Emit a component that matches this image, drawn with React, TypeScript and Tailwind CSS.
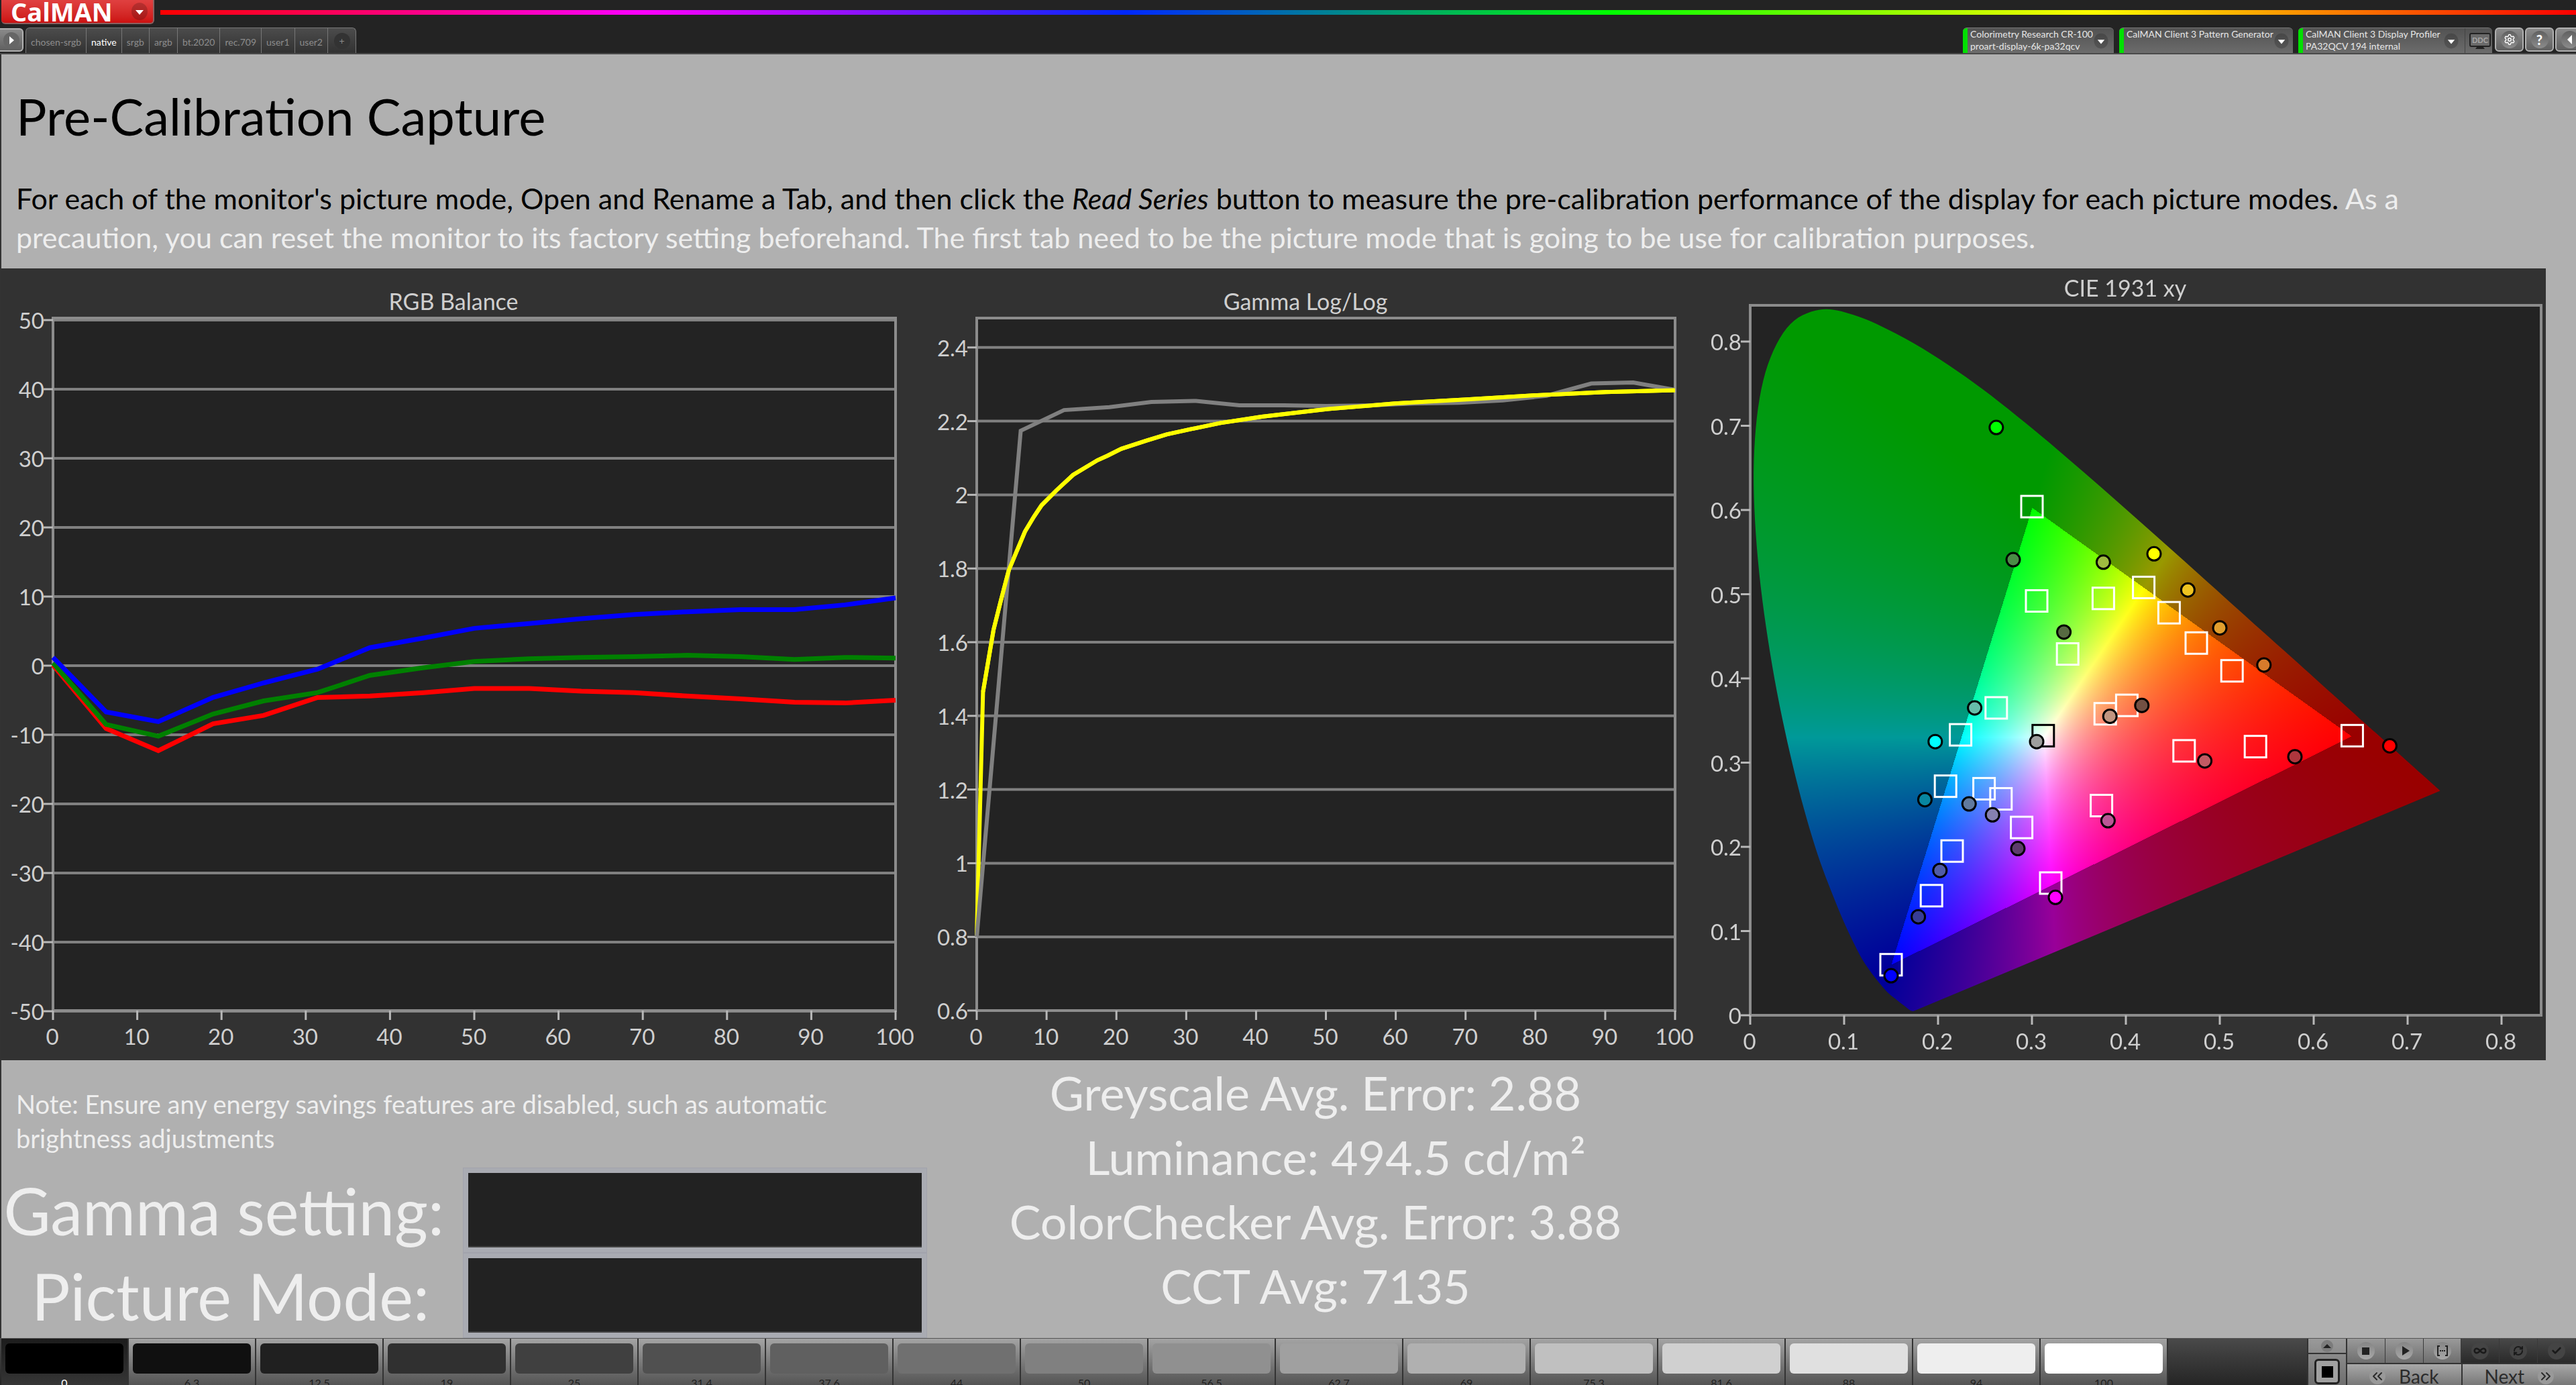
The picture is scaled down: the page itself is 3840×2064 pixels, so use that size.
import { useLayoutEffect, useRef } from "react";
import type { ReactNode } from "react";
import { Check, ChevronsLeft, ChevronsRight, Infinity as Loop, RefreshCw, Settings } from "lucide-react";

type Point = [number, number];

const tabs = ["chosen-srgb", "native", "srgb", "argb", "bt.2020", "rec.709", "user1", "user2"];

const levels = [0, 6.3, 12.5, 19, 25, 31.4, 37.6, 44, 50, 56.5, 62.7, 69, 75.3, 81.6, 88, 94, 100];

const swatches = [
  "bg-[#000000]",
  "bg-[#101010]",
  "bg-[#202020]",
  "bg-[#303030]",
  "bg-[#404040]",
  "bg-[#505050]",
  "bg-[#606060]",
  "bg-[#707070]",
  "bg-[#808080]",
  "bg-[#909090]",
  "bg-[#a0a0a0]",
  "bg-[#b0b0b0]",
  "bg-[#c0c0c0]",
  "bg-[#d0d0d0]",
  "bg-[#e0e0e0]",
  "bg-[#eeeeee]",
  "bg-[#ffffff]"
];

const balance = {
  red: [0.1, -9.1, -12.3, -8.4, -7.2, -4.6, -4.4, -3.9, -3.3, -3.3, -3.7, -3.9, -4.4, -4.8, -5.3, -5.4, -5],
  green: [0.4, -8.5, -10.2, -7, -5.1, -3.9, -1.4, -0.3, 0.6, 1, 1.2, 1.3, 1.5, 1.3, 0.9, 1.2, 1.1],
  blue: [1.2, -6.7, -8.1, -4.6, -2.5, -0.5, 2.6, 4, 5.4, 6.1, 6.8, 7.4, 7.8, 8.1, 8.1, 8.8, 9.8]
};

const gammaMeasured = [
  0.8, 2.174, 2.23, 2.238, 2.252, 2.255, 2.243, 2.243, 2.241, 2.243, 2.248, 2.25, 2.256, 2.269, 2.302, 2.305, 2.285
];

const gammaTarget: Point[] = [
  [0, 0.803], [0.9, 1.465], [2.4, 1.633], [3.4, 1.709], [4.6, 1.796], [6.9, 1.9], [8.2, 1.941], [9.3, 1.972],
  [11.4, 2.012], [13.8, 2.054], [17.3, 2.094], [18.7, 2.106], [20.7, 2.125], [24.3, 2.147], [27.2, 2.164],
  [30.6, 2.178], [34.9, 2.195], [40.8, 2.212], [50.3, 2.233], [59.9, 2.248], [70.2, 2.259], [79.7, 2.27],
  [90, 2.279], [100, 2.284]
];

// CIE 1931 2° observer, 400nm to 700nm
const locus: Point[] = [
  [0.1741, 0.005], [0.1733, 0.0048], [0.1726, 0.0048], [0.1714, 0.0051], [0.1689, 0.0069], [0.1644, 0.0109],
  [0.1566, 0.0177], [0.144, 0.0297], [0.1241, 0.0578], [0.1096, 0.0868], [0.0913, 0.1327], [0.0687, 0.2007],
  [0.0454, 0.295], [0.0235, 0.4127], [0.0082, 0.5384], [0.0039, 0.6548], [0.0139, 0.7502], [0.0389, 0.812],
  [0.0743, 0.8338], [0.1142, 0.8262], [0.1547, 0.8059], [0.1929, 0.7816], [0.2296, 0.7543], [0.2658, 0.7243],
  [0.3016, 0.6923], [0.3373, 0.6589], [0.3731, 0.6245], [0.4087, 0.5896], [0.4441, 0.5547], [0.4788, 0.5202],
  [0.5125, 0.4866], [0.5448, 0.4544], [0.5752, 0.4242], [0.6029, 0.3965], [0.627, 0.3725], [0.6482, 0.3514],
  [0.6658, 0.334], [0.6915, 0.3083], [0.714, 0.2859], [0.726, 0.274], [0.7347, 0.2653]
];

const targets: Point[] = [
  [0.3, 0.604], [0.305, 0.492], [0.376, 0.495], [0.419, 0.508], [0.446, 0.478], [0.475, 0.442], [0.513, 0.409],
  [0.338, 0.429], [0.262, 0.365], [0.224, 0.333], [0.378, 0.358], [0.401, 0.368], [0.462, 0.314], [0.538, 0.319],
  [0.641, 0.332], [0.208, 0.272], [0.249, 0.269], [0.267, 0.257], [0.289, 0.223], [0.374, 0.249], [0.215, 0.195],
  [0.193, 0.142], [0.32, 0.157], [0.15, 0.06]
];

const readings: [number, number, string][] = [
  [0.262, 0.698, "#00ff00"], [0.28, 0.541, "#4b8c46"], [0.376, 0.538, "#9fbb41"], [0.43, 0.548, "#ffff00"],
  [0.466, 0.505, "#eec320"], [0.5, 0.46, "#e29f2e"], [0.547, 0.416, "#d67b2b"], [0.334, 0.455, "#576b42"],
  [0.239, 0.365, "#66bda9"], [0.197, 0.325, "#00ffff"], [0.305, 0.325, "#9e9e9e"], [0.383, 0.355, "#c19580"],
  [0.417, 0.368, "#735043"], [0.484, 0.302, "#c25a63"], [0.58, 0.307, "#af363d"], [0.681, 0.32, "#ff0000"],
  [0.186, 0.256, "#0886a0"], [0.233, 0.251, "#617a9e"], [0.258, 0.238, "#8680b1"], [0.285, 0.198, "#5e3c6c"],
  [0.381, 0.231, "#bb5695"], [0.202, 0.172, "#505ba6"], [0.179, 0.117, "#383d96"], [0.325, 0.14, "#ff00ff"],
  [0.15, 0.047, "#0000ff"]
];

interface Axis {
  ticks: number[];
  at: (value: number) => number;
}

interface Frame {
  left: number;
  top: number;
  right: number;
  bottom: number;
}

interface ChartProps {
  title: string;
  titleX: number;
  titleY: number;
  width: number;
  frame: Frame;
  x: Axis;
  y: Axis;
  grid?: boolean;
  fill?: string;
  children: ReactNode;
}

function range(from: number, step: number, count: number) {
  return Array.from({ length: count }, (_, i) => Number((from + i * step).toFixed(1)));
}

function toPoints(data: Point[], x: Axis, y: Axis) {
  return data.map(([a, b]) => `${x.at(a)},${y.at(b)}`).join(" ");
}

function Chart({ title, titleX, titleY, width, frame, x, y, grid, fill = "#232323", children }: ChartProps) {
  return (
    <svg viewBox={`0 0 ${width} 1180`} className="relative block h-auto w-full" role="img" aria-label={title}>
      <rect
        x={frame.left}
        y={frame.top}
        width={frame.right - frame.left}
        height={frame.bottom - frame.top}
        fill={fill}
      />
      {grid &&
        y.ticks.map((tick) => (
          <line key={tick} x1={frame.left} x2={frame.right} y1={y.at(tick)} y2={y.at(tick)} stroke="#808080" strokeWidth="4" />
        ))}
      <rect
        x={frame.left}
        y={frame.top}
        width={frame.right - frame.left}
        height={frame.bottom - frame.top}
        fill="none"
        stroke="#8c8c8c"
        strokeWidth="4"
      />
      <g stroke="#b8b8b8" strokeWidth="3">
        {y.ticks.map((tick) => (
          <line key={tick} x1={frame.left - 14} x2={frame.left} y1={y.at(tick)} y2={y.at(tick)} />
        ))}
        {x.ticks.map((tick) => (
          <line key={tick} x1={x.at(tick)} x2={x.at(tick)} y1={frame.bottom} y2={frame.bottom + 14} />
        ))}
      </g>
      <g fill="#cfcfcf" fontSize="33">
        <text x={titleX} y={titleY} textAnchor="middle" fontSize="34">
          {title}
        </text>
        {y.ticks.map((tick) => (
          <text key={tick} x={frame.left - 13} y={y.at(tick) + 13} textAnchor="end">
            {tick}
          </text>
        ))}
        {x.ticks.map((tick) => (
          <text key={tick} x={x.at(tick) - 1} y={frame.bottom + 51} textAnchor="middle">
            {tick}
          </text>
        ))}
      </g>
      {children}
    </svg>
  );
}

function RgbBalance() {
  const x: Axis = { ticks: range(0, 10, 11), at: (v) => 77 + v * 12.56 };
  const y: Axis = { ticks: range(-50, 10, 11), at: (v) => 592 - v * 10.3 };
  const zip = (values: number[]) => toPoints(values.map((v, i): Point => [levels[i], v]), x, y);

  return (
    <Chart
      title="RGB Balance"
      titleX={674}
      titleY={62}
      width={1380}
      frame={{ left: 77, top: 74, right: 1333, bottom: 1106 }}
      x={x}
      y={y}
      grid
    >
      <g fill="none" strokeWidth="7">
        <polyline points={zip(balance.red)} stroke="#ff0000" />
        <polyline points={zip(balance.green)} stroke="#008000" />
        <polyline points={zip(balance.blue)} stroke="#0000ff" />
      </g>
    </Chart>
  );
}

function GammaLog() {
  const x: Axis = { ticks: range(0, 10, 11), at: (v) => 74 + v * 10.41 };
  const y: Axis = { ticks: range(0.6, 0.2, 10), at: (v) => 1106 - (v - 0.6) * 549 };

  return (
    <Chart
      title="Gamma Log/Log"
      titleX={564}
      titleY={62}
      width={1158}
      frame={{ left: 74, top: 74, right: 1115, bottom: 1106 }}
      x={x}
      y={y}
      grid
    >
      <g fill="none" strokeWidth="6">
        <polyline points={toPoints(gammaTarget, x, y)} stroke="#ffff00" />
        <polyline points={toPoints(gammaMeasured.map((v, i): Point => [levels[i], v]), x, y)} stroke="#808080" />
        <polyline points={toPoints(gammaTarget.slice(1), x, y)} stroke="#ffff00" />
      </g>
    </Chart>
  );
}

const cieX: Axis = { ticks: range(0, 0.1, 9), at: (v) => 69 + v * 1400 };
const cieY: Axis = { ticks: range(0, 0.1, 9), at: (v) => 1113 - v * 1255 };

// the filled shape reaches slightly further up than the axis ticks
const shapeScaleY = 1261;

// xy to display RGB at full brightness; anything outside Rec.709 is dimmed
function chromaticityColor(x: number, y: number) {
  const X = x / y;
  const Z = (1 - x - y) / y;
  const linear = [
    3.2406 * X - 1.5372 - 0.4986 * Z,
    -0.9689 * X + 1.8758 + 0.0415 * Z,
    0.0557 * X - 0.204 + 1.057 * Z
  ];
  const dim = Math.min(...linear) < 0 ? 0.6 : 1;
  const max = Math.max(...linear);
  return linear.map((c) => (255 * dim * Math.max(c, 0)) / max);
}

function Horseshoe() {
  const ref = useRef<HTMLCanvasElement>(null);

  useLayoutEffect(() => {
    const canvas = ref.current;
    const ctx = canvas?.getContext("2d");
    if (!canvas || !ctx) return;

    const layer = document.createElement("canvas");
    layer.width = canvas.width;
    layer.height = canvas.height;
    const layerCtx = layer.getContext("2d");
    if (!layerCtx) return;

    const image = layerCtx.createImageData(layer.width, layer.height);
    for (let py = 0; py < layer.height; py++) {
      for (let px = 0; px < layer.width; px++) {
        const y = Math.max((1113 - py) / shapeScaleY, 0.001);
        const [r, g, b] = chromaticityColor((px - 69) / 1400, y);
        const i = (py * layer.width + px) * 4;
        image.data[i] = r;
        image.data[i + 1] = g;
        image.data[i + 2] = b;
        image.data[i + 3] = 255;
      }
    }
    layerCtx.putImageData(image, 0, 0);

    ctx.fillStyle = "#232323";
    ctx.fillRect(69, 55, 1179, 1058);
    ctx.save();
    ctx.beginPath();
    // Catmull-Rom through every sample keeps the curve smooth
    const points = locus.map(([x, y]): Point => [cieX.at(x), 1113 - y * shapeScaleY]);
    ctx.moveTo(points[0][0], points[0][1]);
    for (let i = 0; i < points.length - 1; i++) {
      const before = points[Math.max(i - 1, 0)];
      const from = points[i];
      const to = points[i + 1];
      const after = points[Math.min(i + 2, points.length - 1)];
      ctx.bezierCurveTo(
        from[0] + (to[0] - before[0]) / 6,
        from[1] + (to[1] - before[1]) / 6,
        to[0] - (after[0] - from[0]) / 6,
        to[1] - (after[1] - from[1]) / 6,
        to[0],
        to[1]
      );
    }
    ctx.closePath();
    ctx.clip();
    ctx.drawImage(layer, 0, 0);
    ctx.restore();
  }, []);

  return <canvas ref={ref} width={1255} height={1180} className="absolute inset-0 h-full w-full" />;
}

function Chromaticity() {
  return (
    <div className="relative">
      <Horseshoe />
      <Chart
        title="CIE 1931 xy"
        titleX={628}
        titleY={42}
        width={1255}
        frame={{ left: 69, top: 55, right: 1248, bottom: 1113 }}
        x={cieX}
        y={cieY}
        fill="none"
      >
        <g fill="none" stroke="#ffffff" strokeWidth="3">
          {targets.map(([x, y]) => (
            <rect key={`${x}-${y}`} x={cieX.at(x) - 16} y={cieY.at(y) - 16} width="32" height="32" />
          ))}
          <rect x={cieX.at(0.312) - 16} y={cieY.at(0.332) - 16} width="32" height="32" stroke="#000000" />
        </g>
        <g stroke="#000000" strokeWidth="3">
          {readings.map(([x, y, color]) => (
            <circle key={color} cx={cieX.at(x)} cy={cieY.at(y)} r="10" fill={color} />
          ))}
        </g>
      </Chart>
    </div>
  );
}

function Caret({ className }: { className: string }) {
  return (
    <svg viewBox="0 0 24 32" className={className} aria-hidden="true">
      <ellipse cx="12" cy="16" rx="12" ry="13" fill="#000000" opacity="0.18" />
      <path d="M6 14h12l-6 7z" fill="#ffffff" />
    </svg>
  );
}

interface DeviceProps {
  name: string;
  detail?: string;
  className: string;
  children?: ReactNode;
}

function Device({ name, detail, className, children }: DeviceProps) {
  return (
    <div
      className={`flex h-[38px] overflow-hidden rounded-t-md border-t border-[#777] bg-linear-to-b from-[#525252] to-[#6c6c6c] ${className}`}
    >
      <button type="button" className="flex flex-1 items-stretch text-left">
        <span className="w-[7px] bg-[#00e000]" />
        <span className="flex-1 pl-1 text-[14px] leading-[18px] whitespace-nowrap text-[#e6e6e6]">
          {name}
          <br />
          {detail}
        </span>
        <Caret className="mt-[5px] mr-2 h-7 w-6" />
      </button>
      {children}
    </div>
  );
}

function SquareButton({ label, children }: { label: string; children: ReactNode }) {
  return (
    <button
      type="button"
      aria-label={label}
      className="flex h-9 w-[43px] shrink-0 items-center justify-center rounded-md border-2 border-[#b0b0b0] bg-linear-to-b from-[#8a8a8a] to-[#606060]"
    >
      <span className="flex h-[26px] w-[26px] items-center justify-center rounded-full bg-linear-to-b from-[#606060] to-[#8c8c8c] text-white">
        {children}
      </span>
    </button>
  );
}

function Header() {
  return (
    <header className="shrink-0 border-b-2 border-[#4a4a4a] bg-[#232323]">
      <div className="flex h-9 items-center">
        <button
          type="button"
          className="ml-[2px] flex h-9 w-[228px] items-center justify-between rounded-b-md border-r-2 border-b-2 border-[#8a6060] bg-linear-to-b from-[#e04040] to-[#cc1010] pr-2 pl-[14px]"
        >
          <span className="font-['Open_Sans',sans-serif] text-[38px] leading-9 font-bold text-white">CalMAN</span>
          <Caret className="h-8 w-6" />
        </button>
        <div className="ml-[9px] h-[7px] flex-1 bg-[linear-gradient(90deg,#f00,#f0f_20%,#0028ff_40%,#0f0_60%,#ff0_80%,#f00)]" />
      </div>
      <div className="flex h-[43px] items-end justify-between overflow-hidden">
        <div className="flex items-end">
          <button
            type="button"
            aria-label="Expand"
            className="mb-[2px] flex h-[35px] w-[35px] items-center justify-center rounded-r-md border-2 border-l-0 border-[#b0b0b0] bg-linear-to-b from-[#8a8a8a] to-[#606060]"
          >
            <svg viewBox="0 0 26 26" className="h-[26px] w-[26px]" aria-hidden="true">
              <circle cx="13" cy="13" r="12" fill="#666666" />
              <path d="M10 7v12l7-6z" fill="#ffffff" />
            </svg>
          </button>
          <nav className="ml-[3px] flex h-[38px] rounded-t-md border border-b-0 border-[#777] bg-linear-to-b from-[#4c4c4c] to-[#323232]">
            {tabs.map((tab) => (
              <button
                key={tab}
                type="button"
                className={`border-r border-[#777] px-[7px] pt-1 text-[14px] ${tab === "native" ? "text-white" : "text-[#8c8c8c]"}`}
              >
                {tab}
              </button>
            ))}
            <button type="button" aria-label="Add tab" className="flex w-[41px] items-center justify-center">
              <span className="flex h-6 w-6 items-center justify-center rounded-full bg-[#333] text-[14px] text-[#8c8c8c]">
                +
              </span>
            </button>
          </nav>
        </div>
        <div className="flex h-[38px] shrink-0 gap-2">
          <Device name="Colorimetry Research CR-100" detail="proart-display-6k-pa32qcv" className="w-[225px]" />
          <Device name="CalMAN Client 3 Pattern Generator" className="w-[259px]" />
          <Device name="CalMAN Client 3 Display Profiler" detail="PA32QCV 194 internal" className="w-[289px]">
            <button type="button" aria-label="DDC" className="w-[41px] border-l border-[#444] pl-[6px]">
              <svg viewBox="0 0 32 26" className="h-[26px] w-8">
                <rect x="1" y="2" width="30" height="19" rx="2" fill="#6a6a6a" stroke="#222222" strokeWidth="2" />
                <path d="M12 21h8l3 4H9z" fill="#222222" />
                <text x="16" y="16" textAnchor="middle" fontSize="11" fontWeight="bold" fill="#a8a8a8">
                  DDC
                </text>
              </svg>
            </button>
          </Device>
          <div className="-ml-1 flex w-[121px] gap-[2px] overflow-hidden">
            <SquareButton label="Settings">
              <Settings className="h-[18px] w-[18px]" />
            </SquareButton>
            <SquareButton label="Help">
              <span className="text-[20px] leading-6 font-black">?</span>
            </SquareButton>
            <SquareButton label="Collapse">
              <svg viewBox="0 0 12 14" className="h-[14px] w-3" aria-hidden="true">
                <path d="M9 0v14L2 7z" fill="#ffffff" />
              </svg>
            </SquareButton>
          </div>
        </div>
      </div>
    </header>
  );
}

function ToolButton({ label, dark, children }: { label: string; dark?: boolean; children: ReactNode }) {
  return (
    <button
      type="button"
      aria-label={label}
      className={`flex flex-1 items-center justify-center border-r border-[#3a3a3a] bg-linear-to-b ${dark ? "from-[#484848] to-[#2a2a2a]" : "from-[#9a9a9a] to-[#6e6e6e]"}`}
    >
      <span
        className={`flex h-[26px] w-[26px] items-center justify-center rounded-full ${dark ? "bg-[#444] text-[#1a1a1a]" : "bg-linear-to-b from-[#858585] to-[#a8a8a8] text-[#222]"}`}
      >
        {children}
      </span>
    </button>
  );
}

function Footer() {
  return (
    <footer className="flex h-[70px] shrink-0 overflow-hidden border-t border-[#555] bg-linear-to-b from-[#4a4a4a] to-[#252525]">
      <div className="flex w-[3232px] shrink pl-[2px]">
        {levels.map((level, i) => (
          <button
            key={level}
            type="button"
            className={`flex h-20 flex-1 flex-col border-r-2 border-[#333] bg-linear-to-b px-[6px] pt-[7px] text-[16px] ${i === 0 ? "from-[#1c1c1c] to-[#3a3a3a] text-white" : "from-[#a4a4a4] to-[#484848] text-[#222]"}`}
          >
            <span className={`h-[45px] w-full rounded-md ${swatches[i]}`} />
            <span className="mt-1 w-full text-center leading-5">{level}</span>
          </button>
        ))}
      </div>
      <div className="ml-auto flex w-[401px] shrink-0">
        <div className="flex w-[60px] flex-col border-x-2 border-[#333] bg-linear-to-b from-[#9a9a9a] to-[#6e6e6e]">
          <button type="button" aria-label="Show" className="flex h-[23px] items-center justify-center border-b-2 border-[#333]">
            <svg viewBox="0 0 20 20" className="h-5 w-5" aria-hidden="true">
              <circle cx="10" cy="10" r="9" fill="#7c7c7c" />
              <path d="M4 13h12l-6-6z" fill="#222222" />
            </svg>
          </button>
          <button
            type="button"
            aria-label="Pattern window"
            className="mt-[7px] flex h-[38px] w-[38px] items-center justify-center self-center rounded-md border-[3px] border-[#222] bg-[#a0a0a0]"
          >
            <span className="h-[17px] w-[17px] bg-black" />
          </button>
        </div>
        <div className="flex flex-1 flex-col">
          <div className="flex h-[38px] shrink-0 border-b-2 border-[#333]">
            <ToolButton label="Stop">
              <span className="h-[11px] w-[11px] bg-[#222]" />
            </ToolButton>
            <ToolButton label="Read">
              <svg viewBox="0 0 12 14" className="ml-1 h-[14px] w-3" aria-hidden="true">
                <path d="M1 0v14l11-7z" fill="#222222" />
              </svg>
            </ToolButton>
            <ToolButton label="Read Series">
              <svg viewBox="0 0 18 16" className="h-4 w-[18px]" aria-hidden="true">
                <path d="M5 1H2v14h3M13 1h3v14h-3" fill="none" stroke="#222222" strokeWidth="2" />
                <path d="M5 8h2M8 8h2M11 8h2" stroke="#222222" strokeWidth="2" />
              </svg>
            </ToolButton>
            <ToolButton label="Continuous" dark>
              <Loop className="h-5 w-5" strokeWidth={3} />
            </ToolButton>
            <ToolButton label="Refresh" dark>
              <RefreshCw className="h-4 w-4" strokeWidth={3} />
            </ToolButton>
            <ToolButton label="Accept" dark>
              <Check className="h-4 w-4" strokeWidth={4} />
            </ToolButton>
          </div>
          <div className="flex text-[28px] leading-[36px] text-[#2b2b2b]">
            <button
              type="button"
              className="flex flex-1 items-center justify-center gap-5 border-r-2 border-[#333] bg-linear-to-b from-[#a8a8a8] to-[#707070]"
            >
              <ChevronsLeft className="h-6 w-6 rounded-full bg-[#999]" />
              Back
            </button>
            <button
              type="button"
              className="flex flex-1 items-center justify-center gap-5 bg-linear-to-b from-[#a8a8a8] to-[#707070]"
            >
              Next
              <ChevronsRight className="h-6 w-6 rounded-full bg-[#999]" />
            </button>
          </div>
        </div>
      </div>
    </footer>
  );
}

function SettingField({ id, label, className }: { id: string; label: string; className: string }) {
  return (
    <div className="flex h-[127px] items-center">
      <label htmlFor={id} className={`w-[688px] text-right text-[96px] leading-[127px] whitespace-nowrap ${className}`}>
        {label}
      </label>
      <div className="flex-1 self-stretch border border-[#a2a3ac] bg-[#a9abb2] p-[7px]">
        <input id={id} type="text" className="block h-full w-full border-b-2 border-[#444] bg-[#222] px-4 text-[60px] text-white" />
      </div>
    </div>
  );
}

export default function App() {
  return (
    <div className="flex h-screen flex-col overflow-hidden bg-[#b0b0b0] font-[Lato,sans-serif]">
      <Header />
      <main className="flex min-h-0 flex-1 flex-col border-l-2 border-[#333]">
        <section className="px-[22px] pt-10 pb-[17px] text-[43px] leading-[58px]">
          <h1 className="mb-[42px] text-[76px] leading-[104px] text-black">Pre-Calibration Capture</h1>
          <p className="text-[#eee]">
            <span className="text-black">
              For each of the monitor's picture mode, Open and Rename a Tab, and then click the <em>Read Series</em> button
              to measure the pre-calibration performance of the display for each picture modes.
            </span>{" "}
            As a<br />
            precaution, you can reset the monitor to its factory setting beforehand. The first tab need to be the picture
            mode that is going to be use for calibration purposes.
          </p>
        </section>
        <section className="mr-[45px] grid grid-cols-[1380fr_1158fr_1255fr] bg-[#323232]">
          <RgbBalance />
          <GammaLog />
          <Chromaticity />
        </section>
        <section className="mr-[45px] grid flex-1 grid-cols-[1380fr_1158fr_1255fr] text-[#eee]">
          <div className="flex flex-col justify-between">
            <p className="pt-[40px] pl-[22px] text-[38px] leading-[51px]">
              Note: Ensure any energy savings features are disabled, such as automatic
              <br />
              brightness adjustments
            </p>
            <div>
              <SettingField id="gamma-setting" label="Gamma setting:" className="pr-7" />
              <SettingField id="picture-mode" label="Picture Mode:" className="pr-[50px]" />
            </div>
          </div>
          <div className="text-center text-[70px] leading-[96px]">
            <p>Greyscale Avg. Error: 2.88</p>
            <p className="pl-[60px]">Luminance: 494.5 cd/m²</p>
            <p>ColorChecker Avg. Error: 3.88</p>
            <p>CCT Avg: 7135</p>
          </div>
        </section>
      </main>
      <Footer />
    </div>
  );
}
